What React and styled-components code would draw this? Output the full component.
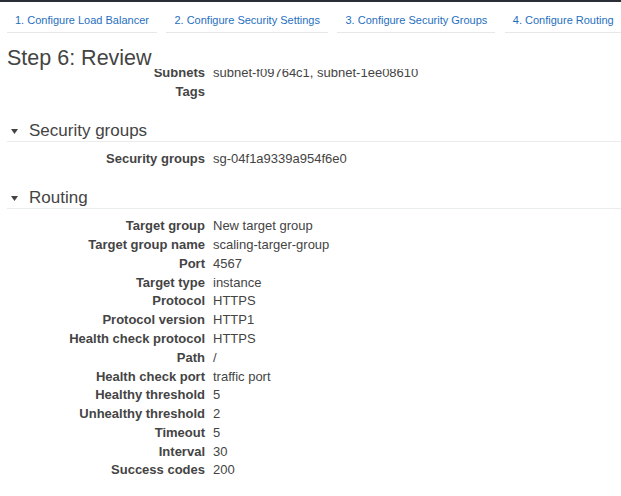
import React from "react";
import styled, { createGlobalStyle } from "styled-components";

const Global = createGlobalStyle`
  html, body { margin: 0; padding: 0; background: #fff; }
  body { font-family: "Liberation Sans", Arial, sans-serif; color: #444; }
`;

const Page = styled.div`
  width: 621px;
  height: 496px;
  display: flex;
  flex-direction: column;
  overflow: hidden;
  background: #fff;
`;

const TopBar = styled.div`
  height: 2px;
  flex: none;
  background: #2a2f37;
`;

const Tabs = styled.nav`
  flex: none;
  display: flex;
  gap: 9.5px;
  padding: 12px 0 0 7px;
  white-space: nowrap;
`;

const Tab = styled.a`
  flex: none;
  padding: 0 8px 5px;
  font-size: 11px;
  line-height: 13px;
  color: #1f6fc0;
  text-decoration: none;
  border-bottom: 1px solid #e6e8e8;
`;

const Title = styled.h1`
  flex: none;
  margin: 0;
  padding: 13.5px 0 0 7px;
  font-size: 21.5px;
  line-height: 22px;
  font-weight: normal;
  color: #444;
  background: #fff;
`;

const Scroller = styled.div`
  flex: 1;
  overflow: hidden;
`;

const Content = styled.div`
  margin-top: -4.6px;
  padding-left: 7px;
`;

const Section = styled.section`
  margin-top: 19.6px;
`;

const SectionHeader = styled.h2`
  margin: 0;
  display: flex;
  align-items: center;
  gap: 11px;
  padding-left: 4px;
  height: 20px;
  font-size: 17px;
  line-height: 20px;
  font-weight: normal;
  color: #444;
  border-bottom: 1px solid #eaeded;
`;

const Caret = styled.svg`
  flex: none;
  width: 7px;
  height: 5px;
  fill: #444;
`;

const Rows = styled.dl`
  margin: 0;
  padding-top: ${(p) => (p.$top ? "8px" : "0")};
`;

const Row = styled.div`
  display: grid;
  grid-template-columns: 198px 1fr;
  column-gap: 8px;
  height: 18.77px;
  align-items: center;
  font-size: 13px;
  line-height: 18.77px;
`;

const Label = styled.dt`
  margin: 0;
  text-align: right;
  font-weight: bold;
  color: #444;
  white-space: nowrap;
`;

const Value = styled.dd`
  margin: 0;
  color: #444;
  white-space: nowrap;
`;

const tabs = [
  "1. Configure Load Balancer",
  "2. Configure Security Settings",
  "3. Configure Security Groups",
  "4. Configure Routing",
];

const routing = [
  ["Target group", "New target group"],
  ["Target group name", "scaling-targer-group"],
  ["Port", "4567"],
  ["Target type", "instance"],
  ["Protocol", "HTTPS"],
  ["Protocol version", "HTTP1"],
  ["Health check protocol", "HTTPS"],
  ["Path", "/"],
  ["Health check port", "traffic port"],
  ["Healthy threshold", "5"],
  ["Unhealthy threshold", "2"],
  ["Timeout", "5"],
  ["Interval", "30"],
  ["Success codes", "200"],
];

const DetailRows = ({ items, top }) => (
  <Rows $top={top}>
    {items.map(([k, v]) => (
      <Row key={k}>
        <Label>{k}</Label>
        <Value>{v}</Value>
      </Row>
    ))}
  </Rows>
);

const Head = ({ children }) => (
  <SectionHeader>
    <Caret viewBox="0 0 7 5">
      <polygon points="0,0 7,0 3.5,5" />
    </Caret>
    {children}
  </SectionHeader>
);

export default function App() {
  return (
    <>
      <Global />
      <Page>
        <TopBar />
        <Tabs>
          {tabs.map((t) => (
            <Tab key={t}>{t}</Tab>
          ))}
        </Tabs>
        <Title>Step 6: Review</Title>
        <Scroller>
          <Content>
            <DetailRows
              items={[
                ["Subnets", "subnet-f09764c1, subnet-1ee08610"],
                ["Tags", ""],
              ]}
            />
            <Section>
              <Head>Security groups</Head>
              <DetailRows top items={[["Security groups", "sg-04f1a9339a954f6e0"]]} />
            </Section>
            <Section>
              <Head>Routing</Head>
              <DetailRows top items={routing} />
            </Section>
          </Content>
        </Scroller>
      </Page>
    </>
  );
}
